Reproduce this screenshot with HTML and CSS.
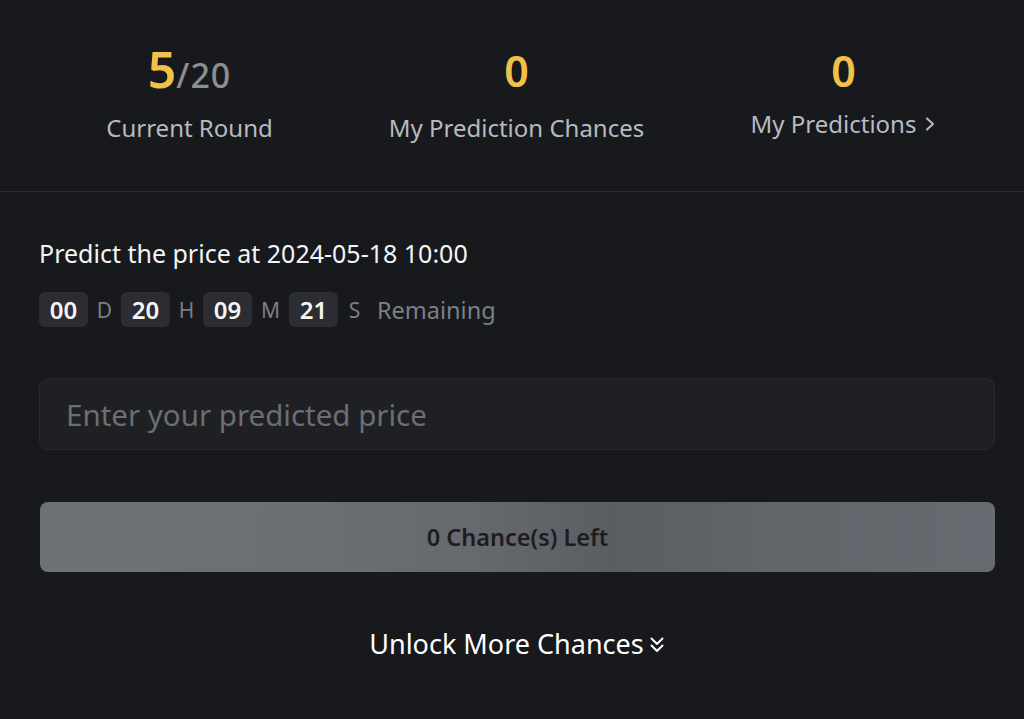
FILE: index.html
```html
<!DOCTYPE html>
<html lang="en">
<head>
<meta charset="utf-8">
<title>Prediction</title>
<link rel="stylesheet" href="styles.css">
</head>
<body>
<div class="page">
  <section class="stats">
    <div class="stat">
      <div class="stat-value"><span class="big">5</span><span class="total">/20</span></div>
      <div class="stat-label">Current Round</div>
    </div>
    <div class="stat">
      <div class="stat-value"><span class="mid">0</span></div>
      <div class="stat-label">My Prediction Chances</div>
    </div>
    <div class="stat stat-link">
      <div class="stat-value"><span class="mid">0</span></div>
      <div class="stat-label">My Predictions
        <svg class="chev" width="12" height="18" viewBox="0 0 12 18"><path d="M3 3.5 L9 9 L3 14.5" fill="none" stroke="currentColor" stroke-width="2" stroke-linecap="round" stroke-linejoin="round"/></svg>
      </div>
    </div>
  </section>

  <section class="predict">
    <div class="title">Predict the price at 2024-05-18 10:00</div>
    <div class="countdown">
      <span class="cbox">00</span><span class="unit">D</span>
      <span class="cbox">20</span><span class="unit">H</span>
      <span class="cbox">09</span><span class="unit unit-wide">M</span>
      <span class="cbox">21</span><span class="unit">S</span>
      <span class="remain">Remaining</span>
    </div>
    <div class="input">Enter your predicted price</div>
    <div class="button">0 Chance(s) Left</div>
    <div class="unlock">Unlock More Chances
      <svg class="dchev" width="16" height="20" viewBox="0 0 16 20"><path d="M2.5 3.5 L8 9 L13.5 3.5 M2.5 10.5 L8 16 L13.5 10.5" fill="none" stroke="currentColor" stroke-width="2" stroke-linecap="round" stroke-linejoin="round"/></svg>
    </div>
  </section>
</div>
</body>
</html>
```

FILE: styles.css
```css
* { box-sizing: border-box; }
html, body {
  margin: 0;
  padding: 0;
  background: #18191c;
}
body {
  font-family: "Noto Sans", "Open Sans", sans-serif;
  color: #eaecef;
  width: 1024px;
  height: 719px;
  overflow: hidden;
}
.stats {
  display: grid;
  grid-template-columns: repeat(3, 327px);
  padding-left: 26px;
  height: 192px;
  border-bottom: 1px solid #2b2d31;
}
.stat {
  display: flex;
  flex-direction: column;
  align-items: center;
  padding-top: 44px;
}
.stat-value {
  height: 50px;
  display: flex;
  align-items: baseline;
  line-height: 1;
  font-weight: 600;
}
.big {
  color: #f1c14a;
  font-size: 50px;
}
.total {
  color: #8b8e93;
  font-size: 34px;
  font-weight: 500;
  letter-spacing: 1px;
}
.mid {
  color: #f1c14a;
  font-size: 43px;
  margin-top: 5px;
}
.stat-label {
  margin-top: 19px;
  font-size: 24px;
  line-height: 30px;
  color: #b7bbc1;
  display: flex;
  align-items: center;
  gap: 8px;
}
.stat-link .stat-label {
  margin-top: 15px;
}
.chev { color: #b7bbc1; }

.predict {
  padding: 0 29px 0 39px;
}
.title {
  margin-top: 46px;
  font-size: 25px;
  color: #f3f4f6;
  line-height: 30px;
}
.countdown {
  margin-top: 24px;
  display: flex;
  align-items: center;
  height: 35px;
}
.cbox {
  background: #2b2d32;
  border-radius: 6px;
  width: 49px;
  height: 35px;
  display: flex;
  align-items: center;
  justify-content: center;
  font-size: 24px;
  font-weight: 600;
  color: #f5f5f5;
}
.unit {
  color: #7b7f86;
  font-size: 21px;
  width: 33px;
  text-align: center;
}
.unit-wide {
  width: 37px;
}
.remain {
  margin-left: 6px;
  color: #7b7f86;
  font-size: 23.5px;
}
.input {
  margin-top: 51px;
  height: 72px;
  background: #1f2024;
  border: 1px solid #26282c;
  border-radius: 9px;
  padding-left: 26px;
  display: flex;
  align-items: center;
  font-size: 29.5px;
  color: #6b6e74;
}
.button {
  margin-top: 52px;
  margin-left: 1px;
  height: 70px;
  border-radius: 8px;
  background: linear-gradient(90deg, #6e7175 0%, #6c7074 25%, #66696e 45%, #5a5d62 60%, #616469 75%, #676a70 100%);
  display: flex;
  align-items: center;
  justify-content: center;
  font-size: 23.5px;
  font-weight: 600;
  color: #1c1d20;
}
.unlock {
  margin-top: 53px;
  display: flex;
  justify-content: center;
  align-items: center;
  gap: 5px;
  font-size: 27px;
  color: #ffffff;
  padding-left: 0;
}
.dchev { color: #ffffff; margin-top: 2px; }
```
